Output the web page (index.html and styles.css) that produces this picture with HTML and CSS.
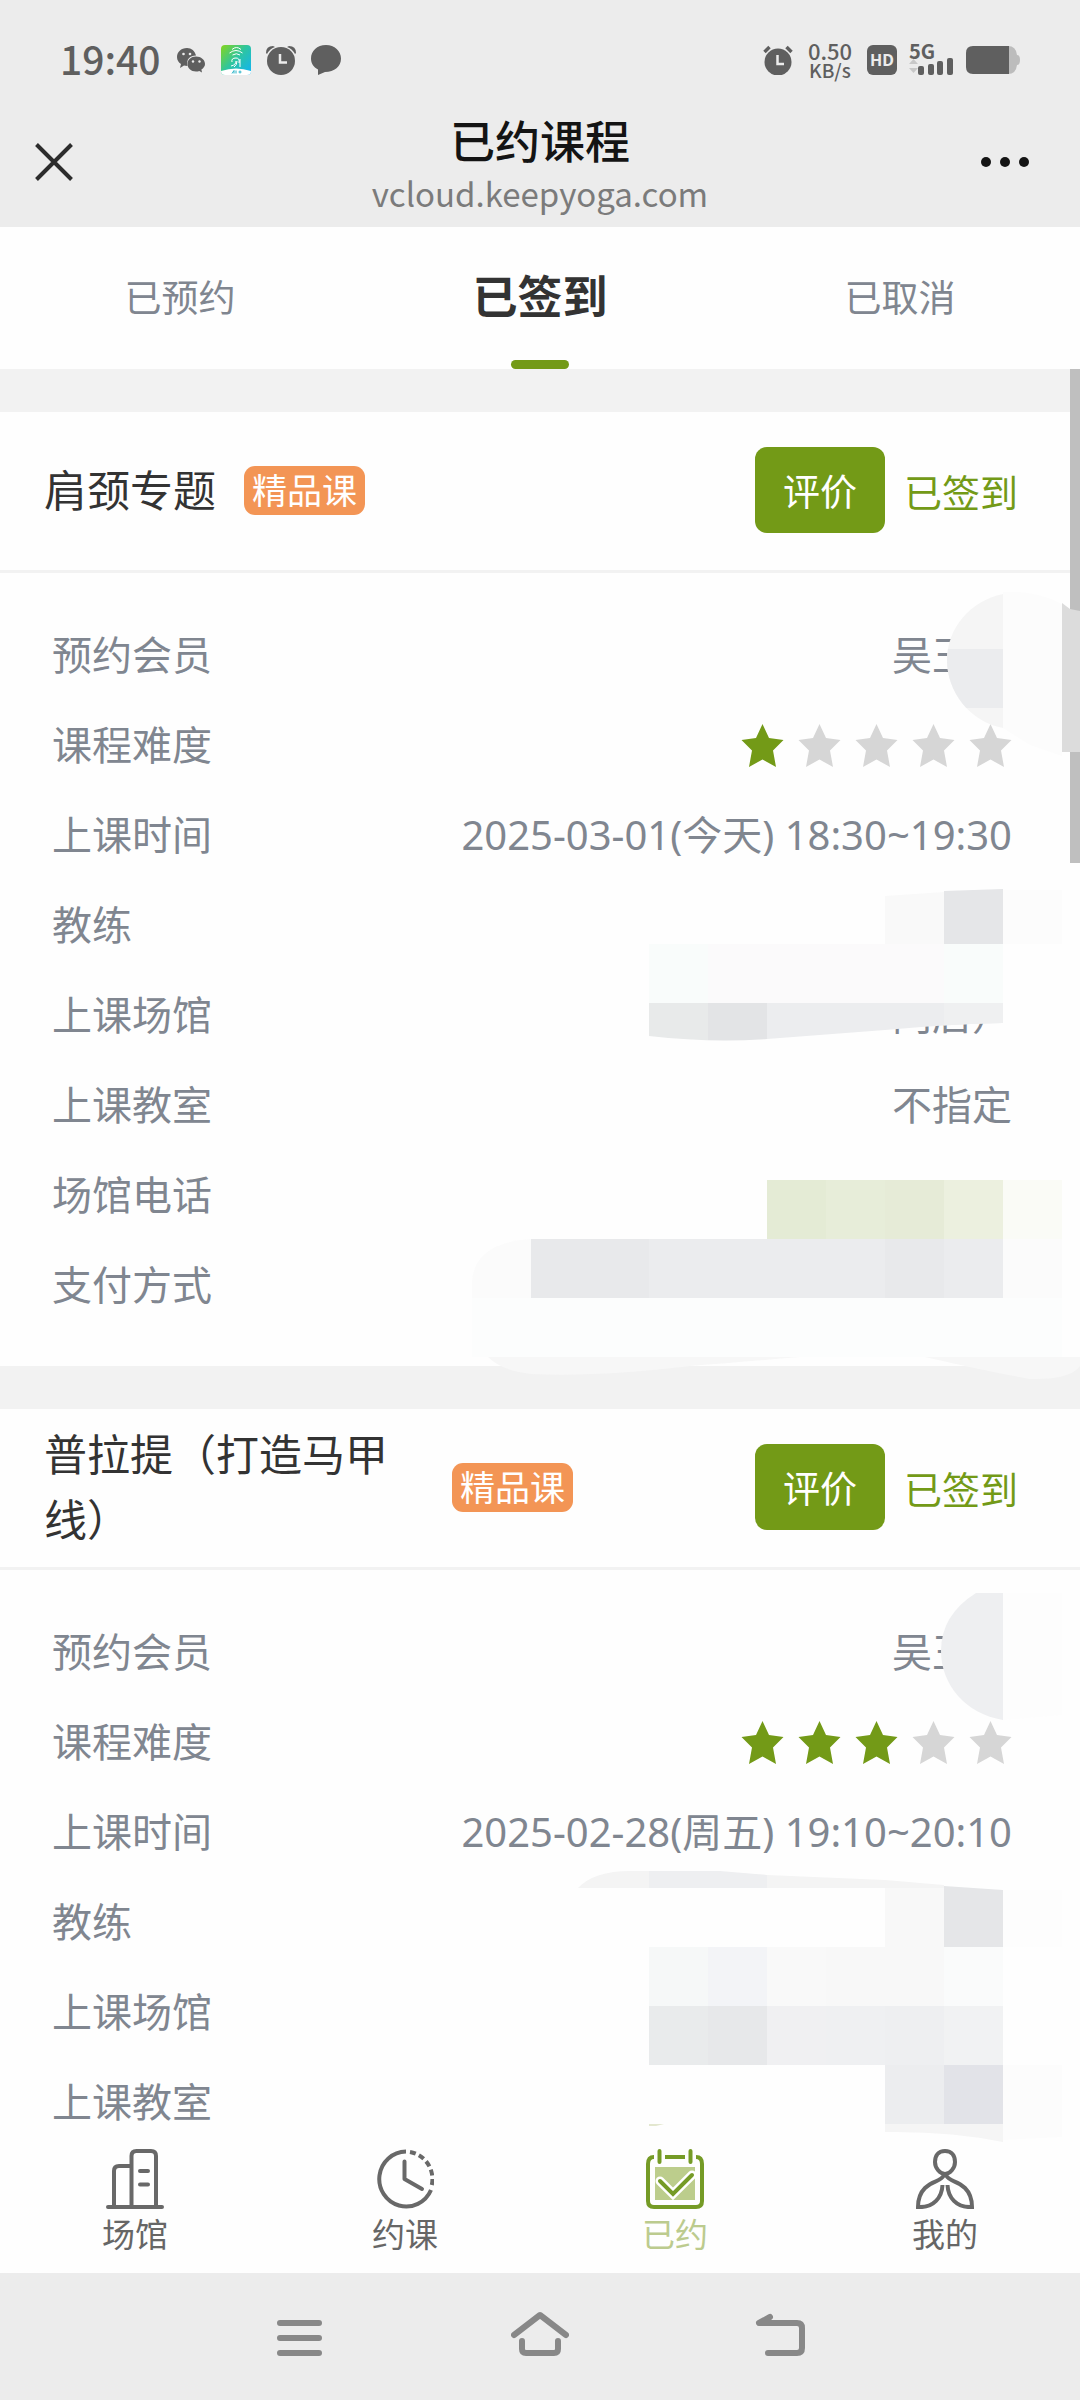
FILE: index.html
```html
<!DOCTYPE html>
<html lang="zh-CN">
<head>
<meta charset="utf-8">
<meta name="viewport" content="width=device-width, initial-scale=1">
<title>已约课程</title>
<link rel="stylesheet" href="styles.css">
</head>
<body>
<svg class="defs" width="0" height="0" aria-hidden="true">
  <symbol id="star" viewBox="0 0 42 43"><path d="M21 0 27.500 14 42 16 31.500 26.500 34.500 43 21 35.500 7.500 43 10.500 26.500 0 16 14.500 14Z"/></symbol>
</svg>
<header class="top">
  <div class="status">
    <div class="status-group">
      <span class="clock">19:40</span>
      <svg class="s-icon" viewBox="0 0 30 30" aria-hidden="true">
        <path fill="#5f5f5f" d="M11 3C5 3 1 7 1 12c0 3 1.500 5.500 4 7l-1 4 4-2.500c1 .3 2 .5 3.500.5C10 14 14 10.500 20 10.500 19 6 15.500 3 11 3Z"/>
        <path fill="#5f5f5f" d="M20 11.500c-5 0-8.500 3.300-8.500 7.500s3.500 7.500 8.500 7.500c1.200 0 2.300-.2 3.300-.6L26 27.500l-.6-3C27.500 23.200 29 21.300 29 19c0-4.200-4-7.500-9-7.500Z"/>
        <g fill="#ececec"><circle cx="7.500" cy="9" r="1.300"/><circle cx="14" cy="9" r="1.300"/><circle cx="17" cy="16.500" r="1.200"/><circle cx="23.500" cy="16.500" r="1.200"/></g>
      </svg>
      <svg class="s-icon" viewBox="0 0 30 30" aria-hidden="true">
        <defs><linearGradient id="app" x1="0" y1="0" x2="1" y2="0.900"><stop offset="0" stop-color="#86d51c"/><stop offset=".5" stop-color="#2ec5a0"/><stop offset="1" stop-color="#12b4f0"/></linearGradient></defs>
        <rect width="30" height="30" rx="4" fill="url(#app)"/>
        <path fill="#fff" d="M0 26q15-5 30 0v0q0 4-4 4H4q-4 0-4-4Z"/>
        <g fill="none" stroke="#fff" stroke-width="1"><path d="M11 4.500q4.500-4 9 0M8.500 8q6.500-5 13 0M11.500 10q4-2.500 7.500 0M11 17q-1-4 4-4 4 0 3 5M10 21q5-1 5-5M13 22q3-2 3-6M19 22V14"/></g>
        <path d="M11 28.500 13 25.500V28.500M15 28.500V25.500M17.500 27h3M19 25.500v3" fill="none" stroke="#2ab4c8"/>
      </svg>
      <svg class="s-icon" viewBox="0 0 30 30" aria-hidden="true">
        <circle cx="15" cy="16" r="14" fill="#5f5f5f"/>
        <path d="M0 8Q0 1 7 1L9 2Q4 3.500 1 9ZM30 8Q30 1 23 1L21 2q5 1.500 8 7Z" fill="#5f5f5f"/>
        <path d="M14 9v8.500h7" fill="none" stroke="#ececec" stroke-width="2.500"/>
      </svg>
      <svg class="s-icon" viewBox="0 0 30 30" aria-hidden="true"><path fill="#5f5f5f" d="M15 0C6 0 0 6 0 13.500c0 5 2.500 8.500 7 11V30l7-3c9.500 0 16-5.500 16-13.500C30 6 23.500 0 15 0Z"/></svg>
    </div>
    <div class="status-group status-right">
      <svg class="s-icon" viewBox="0 0 30 30" aria-hidden="true">
        <circle cx="15" cy="17" r="13.500" fill="#5f5f5f"/>
        <path d="m1.500 7 5-5M28.500 7l-5-5" stroke="#5f5f5f" stroke-width="3.500"/>
        <path d="M14.500 10v9h6.500" fill="none" stroke="#ececec" stroke-width="2.500"/>
      </svg>
      <span class="speed"><b>0.50</b><span>KB/s</span></span>
      <span class="hd">HD</span>
      <span class="net"><b>5G</b>
        <svg width="45" height="17" viewBox="0 0 45 17" aria-hidden="true"><path fill="#c8c8c8" d="M0 6h9L4.500 1ZM0 10h9l-4.500 5Z"/><g fill="#5f5f5f"><rect x="9" y="8" width="6" height="9" rx="2"/><rect x="19" y="6" width="6" height="11" rx="2"/><rect x="28" y="3" width="6" height="14" rx="2"/><rect x="38" y="0" width="6" height="17" rx="2"/></g></svg>
      </span>
      <svg width="54" height="28" viewBox="0 0 54 28" aria-hidden="true"><path fill="#bcbcbc" d="M42 0q8 0 9 9 3 0 3 5t-3 5q-1 9-9 9Z"/><path fill="#5f5f5f" d="M7 0H43V28H7Q0 28 0 21V7Q0 0 7 0Z"/></svg>
    </div>
  </div>
  <div class="titlebar">
    <button class="bar-btn" aria-label="关闭"><svg width="38" height="38" viewBox="0 0 38 38"><path d="m1.500 1.500 35 35m0-35-35 35" stroke="#2c2c2c" stroke-width="4" fill="none"/></svg></button>
    <div class="title-block">
      <h1>已约课程</h1>
      <p>vcloud.keepyoga.com</p>
    </div>
    <button class="bar-btn bar-more" aria-label="更多"><svg width="48" height="10" viewBox="0 0 48 10" fill="#141414"><circle cx="5" cy="5" r="5"/><circle cx="24" cy="5" r="5"/><circle cx="43" cy="5" r="5"/></svg></button>
  </div>
</header>

<nav class="tabs">
  <a href="#booked">已预约</a>
  <a href="#signed" class="on">已签到</a>
  <a href="#cancelled">已取消</a>
</nav>

<main class="list">
  <div class="thumb"></div>
  <section class="card">
    <div class="card-head">
      <h2>肩颈专题</h2><span class="tag">精品课</span>
      <button class="rate">评价</button><span class="state">已签到</span>
    </div>
    <dl class="rows">
      <div><dt>预约会员</dt><dd>吴王<span class="hidden-char"></span></dd></div>
      <div><dt>课程难度</dt><dd class="stars"><svg class="lit"><use href="#star"/></svg><svg><use href="#star"/></svg><svg><use href="#star"/></svg><svg><use href="#star"/></svg><svg><use href="#star"/></svg></dd></div>
      <div><dt>上课时间</dt><dd>2025-03-01(今天) 18:30~19:30</dd></div>
      <div><dt>教练</dt><dd></dd></div>
      <div><dt>上课场馆</dt><dd>门店）</dd></div>
      <div><dt>上课教室</dt><dd>不指定</dd></div>
      <div><dt>场馆电话</dt><dd></dd></div>
      <div><dt>支付方式</dt><dd></dd></div>
    </dl>
    <svg class="mosaic" width="620" height="997" viewBox="460 412 620 997" aria-hidden="true">
      <defs>
        <clipPath id="c1"><path d="M1003 594C970 601 947 628 947 660S970 722 1003 728Z"/></clipPath>
        <clipPath id="c2"><path d="M649 891H885Q940 890 1003 889V1023Q950 1024 885 1030L767 1039Q710 1043 649 1036Z"/></clipPath>
        <clipPath id="c3"><path d="M472 1282Q474 1243 531 1239H1062V1357H472Z"/></clipPath>
      </defs>
      <path fill="#fcfcfc" d="M1003 592Q1035 590 1062 604V756L1030 745 1003 728Z"/>
      <g clip-path="url(#c1)"><path fill="#f5f5f5" d="M944 590h59v140h-59Z"/><path fill="#ebecee" d="M944 649h59v59h-59Z"/></g>
      <path fill="#dcdcdc" d="M1062 603 1070 609 1080 611V752H1062Z"/>
      <path fill="#f9f9f9" d="M885 896 944 892V944H885Z"/>
      <path fill="#e5e6e8" d="M944 891 1003 889V944H944Z"/>
      <path fill="#fcfcfc" d="M1003 890h59v54h-59Z"/>
      <g clip-path="url(#c2)">
        <path fill="#fbfafb" d="M649 944h354v59H649Z"/><path fill="#f9fcfb" d="M649 944h59v59h-59ZM944 944h59v59h-59Z"/>
        <path fill="#e8eaea" d="M649 1003h59v40h-59Z"/><path fill="#e3e4e6" d="M708 1003h59v40h-59Z"/><path fill="#ecedef" d="M767 1003h236v40H767Z"/><path fill="#eff0f1" d="M944 1003h59v40h-59Z"/>
      </g>
      <path fill="#e4ebd5" d="M767 1180h59v59h-59Z"/><path fill="#e7edd9" d="M826 1180h59v59h-59Z"/><path fill="#e6ebd7" d="M885 1180h59v59h-59Z"/><path fill="#ecf0df" d="M944 1180h59v59h-59Z"/><path fill="#fafbf6" d="M1003 1180h59v59h-59Z"/>
      <g clip-path="url(#c3)">
        <path fill="#fbfbfb" d="M472 1239h590v59H472Z"/><path fill="#ebecee" d="M531 1239h472v59H531Z"/><path fill="#e8e9eb" d="M531 1239h118v59H531ZM885 1239h59v59h-59Z"/>
        <path fill="#fcfdfd" d="M472 1298h590v59H472Z"/>
      </g>
      <path fill="#f7f7f7" d="M488 1357H800Q740 1362 690 1366 600 1377 531 1374 502 1371 488 1357ZM925 1357H1080V1366Q1070 1380 1030 1379 990 1372 925 1357Z"/>
    </svg>
  </section>

  <section class="card">
    <div class="card-head">
      <h2>普拉提（打造马甲线）</h2><span class="tag">精品课</span>
      <button class="rate">评价</button><span class="state">已签到</span>
    </div>
    <dl class="rows rows-cut">
      <div><dt>预约会员</dt><dd>吴王<span class="hidden-char"></span></dd></div>
      <div><dt>课程难度</dt><dd class="stars"><svg class="lit"><use href="#star"/></svg><svg class="lit"><use href="#star"/></svg><svg class="lit"><use href="#star"/></svg><svg><use href="#star"/></svg><svg><use href="#star"/></svg></dd></div>
      <div><dt>上课时间</dt><dd>2025-02-28(周五) 19:10~20:10</dd></div>
      <div><dt>教练</dt><dd></dd></div>
      <div><dt>上课场馆</dt><dd></dd></div>
      <div><dt>上课教室</dt><dd></dd></div>
    </dl>
    <svg class="mosaic" width="620" height="740" viewBox="460 1409 620 740" aria-hidden="true">
      <path fill="#eeeff1" d="M976 1593H1003V1720C966 1714 941 1685 941 1651Q941 1615 976 1593Z"/>
      <path fill="#fdfdfd" d="M1003 1593h59v122l-59 5Z"/>
      <path fill="#f4f4f4" d="M578 1888Q594 1871 630 1871H700L767 1875 885 1880 944 1885V1888Z"/>
      <path fill="#eeeff1" d="M649 1871H720L767 1875V1888H649Z"/>
      <path fill="#f8f8f8" d="M885 1888h59v59h-59Z"/><path fill="#e5e6e8" d="M944 1886 1003 1890V1947H944Z"/><path fill="#fdfdfd" d="M1003 1890h59v57h-59Z"/>
      <path fill="#f6f8f8" d="M649 1947h59v59h-59Z"/><path fill="#f3f4f7" d="M708 1947h59v59h-59Z"/><path fill="#f9f9f9" d="M767 1947h59v59h-59Z"/><path fill="#f8f8f8" d="M826 1947h118v59H826Z"/><path fill="#fafbfb" d="M944 1947h59v59h-59Z"/>
      <path fill="#e9ebec" d="M649 2006h59v59h-59Z"/><path fill="#e7e8ea" d="M708 2006h59v59h-59Z"/><path fill="#f0f0f2" d="M767 2006h59v59h-59Z"/><path fill="#eff0f2" d="M826 2006h59v59h-59Z"/><path fill="#eeeff1" d="M885 2006h59v59h-59Z"/><path fill="#f1f2f3" d="M944 2006h59v59h-59Z"/>
      <path fill="#ecedef" d="M885 2065h59v59h-59Z"/><path fill="#e2e3e8" d="M944 2065h59v59h-59Z"/><path fill="#fcfcfc" d="M1003 2065h59v72l-59 3Z"/>
      <path fill="#f5f5f5" d="M885 2124H1003V2142Q950 2131 885 2132Z"/>
      <path fill="#e3e7cf" d="M649 2124h15l-8 2h-7Z"/>
    </svg>
  </section>
</main>

<nav class="bottom">
  <a href="#venue">
    <svg viewBox="0 0 58 60" fill="none" stroke="#686868" stroke-width="4" stroke-linecap="round" aria-hidden="true"><path d="M2 58H56M8 57V22q0-5 5-5H25M25.500 57V7q0-5 5-5H45q5 0 5 5V57M34 22h8M34 35.500h8"/></svg>
    <span>场馆</span>
  </a>
  <a href="#book">
    <svg viewBox="0 0 58 60" fill="none" stroke="#686868" stroke-width="4" aria-hidden="true"><path d="M30 2.500A27 27.500 0 1 0 55 41"/><path d="M34 3A27 27.500 0 0 1 55 39" stroke-dasharray="6 3.500"/><path d="M28.500 12.500V30L46 40" stroke-linecap="round" stroke-linejoin="round"/></svg>
    <span>约课</span>
  </a>
  <a href="#booked-list" class="on">
    <svg viewBox="0 0 58 60" fill="none" aria-hidden="true"><path fill="#bccd8c" d="M9 18H49V51H9Z"/><g stroke="#759b26" stroke-width="4"><path d="M8 8Q2 8 2 15V52q0 6 6 6H50q6 0 6-6V15q0-7-6-7M19 8H39"/><path d="M13.500 2V13M44.500 2V13" stroke-linecap="round"/></g><path d="M14 32 27 45 46 26" stroke="#fff" stroke-width="9" stroke-linecap="round"/><path d="M14 32 27 45 46 26" stroke="#759b26" stroke-width="4" stroke-linecap="round"/></svg>
    <span>已约</span>
  </a>
  <a href="#me">
    <svg viewBox="0 0 58 60" fill="none" stroke="#686868" stroke-width="4" aria-hidden="true"><path d="M29 2C22 2 19 7 19 13 19 19 24 25 29 25S39 19 39 13C39 7 36 2 29 2Z"/><path d="M28 26C25 33 17 31 9 39 3 45 2 52 2 58 18 59 26 48 26.500 36M30 26C33 33 41 31 49 39 55 45 56 52 56 58 40 59 32 48 31.500 36"/></svg>
    <span>我的</span>
  </a>
</nav>

<footer class="sysbar">
  <button aria-label="最近任务"><svg viewBox="0 0 58 46"><path d="M9 12H48M9 27H48M9 42H48" /></svg></button>
  <button aria-label="主屏幕"><svg viewBox="0 0 58 46"><path d="M3 24 29 4 55 24M11 30v8q0 4 4 4H43q4 0 4-4V30"/></svg></button>
  <button aria-label="返回"><svg viewBox="0 0 58 46"><path d="M19 6 8 12H46q5 0 5 5V37q0 5-5 5H17"/></svg></button>
</footer>
</body>
</html>
```

FILE: styles.css
```css
* { box-sizing: border-box; }

body {
  margin: 0;
  min-height: 100vh;
  display: flex;
  flex-direction: column;
  background: #fefefe;
  color: #808690;
  font-family: "Noto Sans", "Noto Sans CJK SC", sans-serif;
  font-size: 40px;
}

h1, h2, p, dl, dd { margin: 0; }
h1, h2 { font-weight: 400; }
a { text-decoration: none; color: inherit; }
button { border: 0; padding: 0; background: none; font: inherit; }
svg { display: block; flex: none; }
.defs { position: absolute; }

/* status bar and title */
.top { background: #ececec; }

.status {
  height: 112px;
  padding: 7px 60px 0;
  display: flex;
  align-items: center;
  justify-content: space-between;
  color: #5f5f5f;
}
.status-group { display: flex; align-items: center; gap: 15px; }
.status-right { gap: 12px; }
.clock {
  padding-bottom: 3px;
  font-family: "Noto Sans CJK SC", sans-serif;
  font-weight: 500;
  font-size: 39px;
  line-height: 40px;
}
.s-icon { width: 30px; height: 30px; }
.speed {
  display: flex;
  flex-direction: column;
  align-items: center;
  width: 50px;
  font-family: "Noto Sans CJK SC", sans-serif;
  font-size: 22px;
  line-height: 19px;
  font-weight: 500;
}
.speed b { font-weight: 500; }
.speed span { font-size: 19px; }
.hd {
  width: 30px;
  height: 30px;
  border-radius: 6px;
  background: #5f5f5f;
  color: #ececec;
  font-size: 16px;
  font-weight: 700;
  line-height: 30px;
  text-align: center;
}
.net {
  display: flex;
  flex-direction: column;
  font-family: "Noto Sans CJK SC", sans-serif;
  font-size: 20px;
  line-height: 14px;
}

.titlebar {
  display: grid;
  grid-template-columns: 1fr auto 1fr;
  padding: 0 51px 9px 35px;
}
.bar-btn { height: 99px; display: flex; align-items: center; justify-self: start; }
.bar-more { justify-self: end; }
.title-block { text-align: center; padding-left: 16px; }
.title-block h1 {
  font-size: 45px;
  line-height: 56px;
  font-weight: 500;
  font-family: "Noto Sans CJK SC", sans-serif;
  color: #141414;
}
.title-block p {
  font-family: "Noto Sans CJK SC", sans-serif;
  font-size: 33px;
  line-height: 50px;
  color: #7b7b7b;
}

/* tabs */
.tabs {
  display: grid;
  grid-template-columns: repeat(3, 1fr);
  height: 142px;
  text-align: center;
  font-size: 37px;
  line-height: 142px;
}
.tabs a { position: relative; }
.tabs .on { font-size: 45px; line-height: 140px; font-weight: 700; color: #333; }
.tabs .on::after {
  content: "";
  position: absolute;
  left: calc(50% - 29px);
  bottom: 0;
  width: 58px;
  height: 9px;
  border-radius: 5px;
  background: #739a17;
}

/* course list */
.list { flex: 1; position: relative; }
.thumb {
  position: absolute;
  top: 0;
  right: 0;
  z-index: 1;
  width: 10px;
  height: 494px;
  background: #bfbfbf;
}
.card { position: relative; border-top: 43px solid #f2f2f2; }
.mosaic { position: absolute; top: 0; right: 0; z-index: 2; overflow: visible; }

.card-head {
  height: 161px;
  padding: 0 62px 2px 44px;
  display: flex;
  align-items: center;
  border-bottom: 3px solid #f2f2f2;
}
.card-head h2 { max-width: 380px; font-size: 43px; line-height: 65px; color: #333; }
.tag {
  flex: none;
  margin-left: 28px;
  padding: 0 8px;
  border-radius: 11px;
  background: #f39555;
  color: #fff;
  font-size: 35px;
  line-height: 49px;
}
.rate {
  flex: none;
  width: 130px;
  height: 86px;
  margin-left: auto;
  border-radius: 12px;
  background: #739a17;
  color: #fff;
  font-size: 37px;
}
.state { flex: none; margin-left: 19px; font-size: 38px; color: #739a17; }

.rows { padding: 37px 68px 36px 52px; }
.rows-cut { padding-bottom: 0; }
.rows > div {
  height: 90px;
  display: flex;
  align-items: center;
  justify-content: space-between;
  line-height: 60px;
}
.hidden-char { display: inline-block; width: 1em; }
.stars { display: flex; gap: 14px; }
.stars svg { width: 43px; height: 43px; fill: #d6d6d6; }
.stars .lit { fill: #739a17; }

/* bottom navigation */
.bottom {
  height: 126px;
  padding-top: 2px;
  display: grid;
  grid-template-columns: repeat(4, 1fr);
  color: #666;
  font-size: 33px;
  line-height: 52px;
}
.bottom a { display: flex; flex-direction: column; align-items: center; }
.bottom svg { width: 58px; height: 60px; }
.bottom .on { color: #bccb8e; }

.sysbar {
  height: 127px;
  padding: 0 180px 6px;
  display: grid;
  grid-template-columns: repeat(3, 1fr);
  justify-items: center;
  align-items: center;
  background: #ececec;
}
.sysbar svg {
  width: 58px;
  height: 46px;
  fill: none;
  stroke: #888;
  stroke-width: 6;
  stroke-linecap: round;
  stroke-linejoin: round;
}
```
